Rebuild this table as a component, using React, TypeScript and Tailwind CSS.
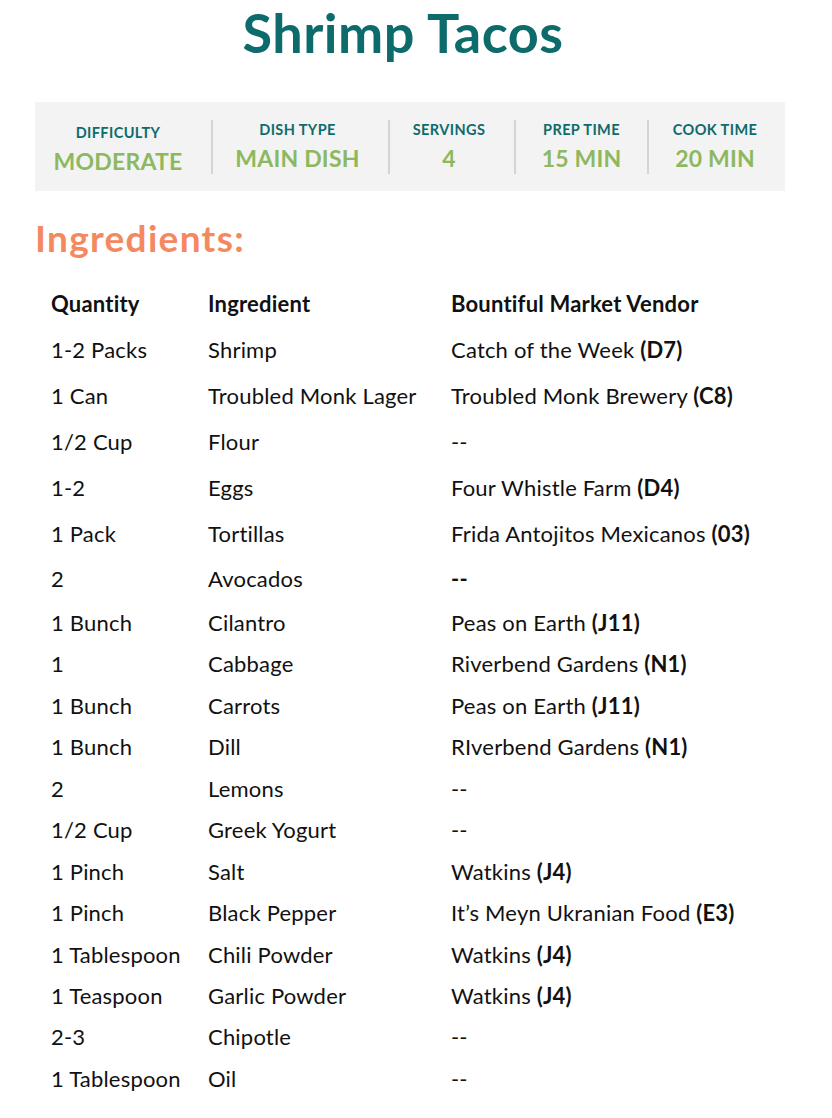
import React from 'react';

const stats = [
  { label: 'DIFFICULTY', value: 'MODERATE', w: 'w-[176px] pr-[10px]', low: true },
  { label: 'DISH TYPE', value: 'MAIN DISH', w: 'w-[177px] pr-[6px]' },
  { label: 'SERVINGS', value: '4', w: 'w-[126px] pr-[6px]' },
  { label: 'PREP TIME', value: '15 MIN', w: 'w-[133px]' },
  { label: 'COOK TIME', value: '20 MIN', w: 'flex-1 pr-[4px]' },
];

const rows: [string, string, string, string?][] = [
  ['1-2 Packs', 'Shrimp', 'Catch of the Week ', '(D7)'],
  ['1 Can', 'Troubled Monk Lager', 'Troubled Monk Brewery ', '(C8)'],
  ['1/2 Cup', 'Flour', '--'],
  ['1-2', 'Eggs', 'Four Whistle Farm ', '(D4)'],
  ['1 Pack', 'Tortillas', 'Frida Antojitos Mexicanos ', '(03)'],
  ['2', 'Avocados', '', '--'],
  ['1 Bunch', 'Cilantro', 'Peas on Earth ', '(J11)'],
  ['1', 'Cabbage', 'Riverbend Gardens ', '(N1)'],
  ['1 Bunch', 'Carrots', 'Peas on Earth ', '(J11)'],
  ['1 Bunch', 'Dill', 'RIverbend Gardens ', '(N1)'],
  ['2', 'Lemons', '--'],
  ['1/2 Cup', 'Greek Yogurt', '--'],
  ['1 Pinch', 'Salt', 'Watkins ', '(J4)'],
  ['1 Pinch', 'Black Pepper', 'It\u2019s Meyn Ukranian Food ', '(E3)'],
  ['1 Tablespoon', 'Chili Powder', 'Watkins ', '(J4)'],
  ['1 Teaspoon', 'Garlic Powder', 'Watkins ', '(J4)'],
  ['2-3', 'Chipotle', '--'],
  ['1 Tablespoon', 'Oil', '--'],
];

export default function App() {
  return (
    <div className="w-[832px] min-h-[1118px] bg-white font-['Lato',sans-serif] text-[#111]">
      <h1 className="h-[72px] pr-[26px] text-center text-[54px] font-bold leading-[66px] text-[#0e6b6b] tracking-[0.5px]">
        Shrimp Tacos
      </h1>

      {/* stats bar */}
      <div className="ml-[35px] w-[750px] mt-[30px] h-[89px] bg-[#f3f3f3] flex items-center">
        {stats.map((s, i) => (
          <div
            key={s.label}
            className={`${s.w} h-[54px] flex flex-col items-center justify-center ${
              i > 0 ? 'border-l-2 border-[#d4d4d4]' : ''
            }`}
          >
            <div
              className={`text-[14.5px] font-bold leading-[18px] tracking-[0.4px] text-[#0e6b6b] ${
                s.low ? 'mt-[5px]' : ''
              }`}
            >
              {s.label}
            </div>
            <div className="text-[23px] font-bold leading-[28px] tracking-[0.2px] text-[#8db860] mt-[5px]">
              {s.value}
            </div>
          </div>
        ))}
      </div>

      <h2 className="ml-[35px] mt-[24px] h-[46px] text-[37px] font-bold leading-[46px] tracking-[1.3px] text-[#f4895f]">
        Ingredients:
      </h2>

      <div className="ml-[35px] mt-[19px] text-[22px] tracking-[0.2px]">
        <div className="flex h-[47px] items-center font-bold">
          <div className="w-[173px] pl-[16px]">Quantity</div>
          <div className="w-[243px]">Ingredient</div>
          <div>Bountiful Market Vendor</div>
        </div>
        {rows.map((r, i) => (
          <div key={i} className={`flex items-center ${i < 6 ? 'h-[45.8px]' : 'h-[41.45px]'}`}>
            <div className="w-[173px] pl-[16px]">{r[0]}</div>
            <div className="w-[243px]">{r[1]}</div>
            <div>
              {r[2]}
              {r[3] && <span className="font-bold">{r[3]}</span>}
            </div>
          </div>
        ))}
      </div>
    </div>
  );
}
